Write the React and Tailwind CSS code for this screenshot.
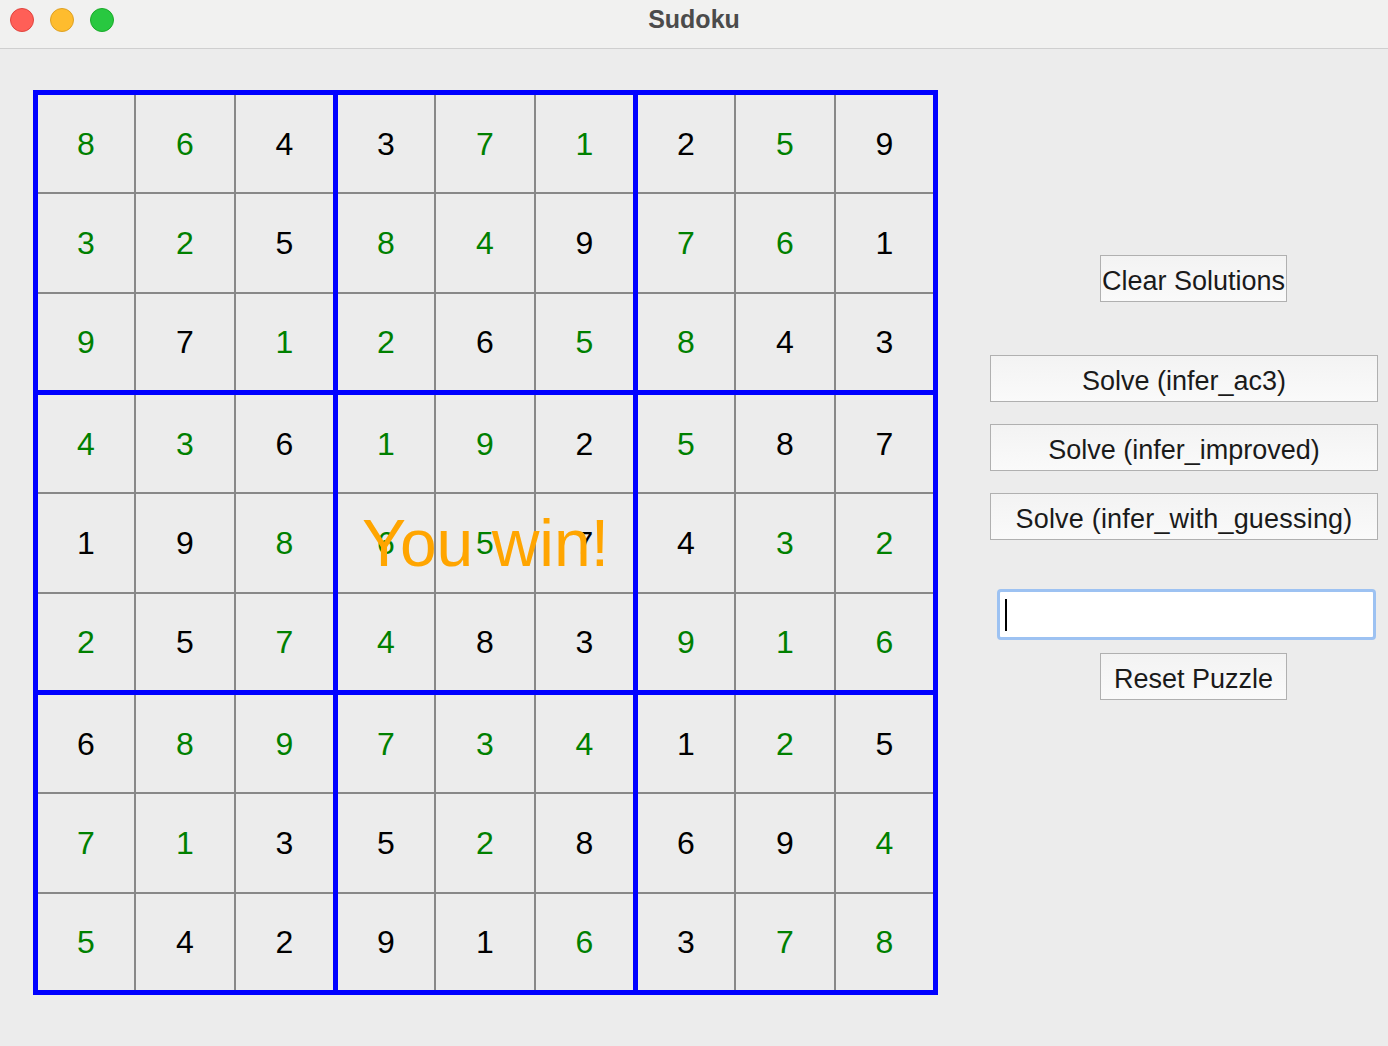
const ROWS = [
  ["864371259", "110011010"],
  ["325849761", "110110110"],
  ["971265843", "101101100"],
  ["436192587", "110110100"],
  ["198657432", "001110011"],
  ["257483916", "101100111"],
  ["689734125", "011111010"],
  ["713528694", "110010001"],
  ["542916378", "100001011"],
];

const font = { fontFamily: '"Liberation Sans", Arial, sans-serif' };

function Box({ br, bc }) {
  const cells = [];
  for (let r = 0; r < 3; r++) {
    for (let c = 0; c < 3; c++) {
      const row = ROWS[br * 3 + r];
      const i = bc * 3 + c;
      const green = row[1][i] === "1";
      cells.push(
        <div
          key={r + "-" + c}
          className={
            "flex items-center justify-center bg-[#ececec] text-[32px] " +
            (green ? "text-[#008000]" : "text-black")
          }
        >
          {row[0][i]}
        </div>
      );
    }
  }
  return (
    <div className="grid grid-cols-[96px_98px_97px] grid-rows-[97px_98px_96px] gap-[2px] bg-[#888888]">
      {cells}
    </div>
  );
}

function Board() {
  const boxes = [];
  for (let br = 0; br < 3; br++)
    for (let bc = 0; bc < 3; bc++) boxes.push(<Box key={br + "" + bc} br={br} bc={bc} />);
  return (
    <div className="relative">
      <div className="grid grid-cols-3 gap-[5px] bg-[#0000ff] p-[5px]">{boxes}</div>
      <div className="pointer-events-none absolute inset-0 flex items-center justify-center">
        <span className="text-[66px] leading-none text-[#ffa500]">You win!</span>
      </div>
    </div>
  );
}

function Btn({ children, className = "" }) {
  return (
    <button
      className={
        "flex h-[47px] items-center justify-center whitespace-nowrap border border-[#b0b0b0] bg-gradient-to-b from-[#f3f3f3] to-[#fafafa] pt-[5px] text-[27px] leading-none text-[#1a1a1a] " +
        className
      }
    >
      {children}
    </button>
  );
}

export default function App() {
  return (
    <div className="h-[1046px] w-[1388px] overflow-hidden bg-[#ececec]" style={font}>
      <div className="relative flex h-[49px] items-center justify-center border-b border-[#cfcfcf] bg-[#f1f1f0] pb-[9px]">
        <div className="absolute left-[10px] top-[8px] flex gap-[16px]">
          <span className="h-[24px] w-[24px] rounded-full border border-[#e0443e] bg-[#ff5f57]" />
          <span className="h-[24px] w-[24px] rounded-full border border-[#dea123] bg-[#febc2e]" />
          <span className="h-[24px] w-[24px] rounded-full border border-[#1aab29] bg-[#28c840]" />
        </div>
        <span className="text-[25px] font-bold leading-none text-[#4b4b4b]">Sudoku</span>
      </div>
      <div className="flex pl-[33px] pt-[41px]">
        <Board />
        <div className="ml-[52px] flex w-[388px] flex-col pt-[165px]">
          <Btn className="ml-[110px] w-[187px]">Clear Solutions</Btn>
          <Btn className="mt-[53px] w-[388px]">Solve (infer_ac3)</Btn>
          <Btn className="mt-[22px] w-[388px]">Solve (infer_improved)</Btn>
          <Btn className="mt-[22px] w-[388px] tracking-[0.2px]">Solve (infer_with_guessing)</Btn>
          <div className="ml-[7px] mt-[49px] flex h-[51px] w-[379px] items-center rounded-[4px] border-[3px] border-[#9dc2f2] bg-white pl-[5px]">
            <span className="h-[32px] w-[2px] bg-black" />
          </div>
          <Btn className="ml-[110px] mt-[13px] w-[187px]">Reset Puzzle</Btn>
        </div>
      </div>
    </div>
  );
}
